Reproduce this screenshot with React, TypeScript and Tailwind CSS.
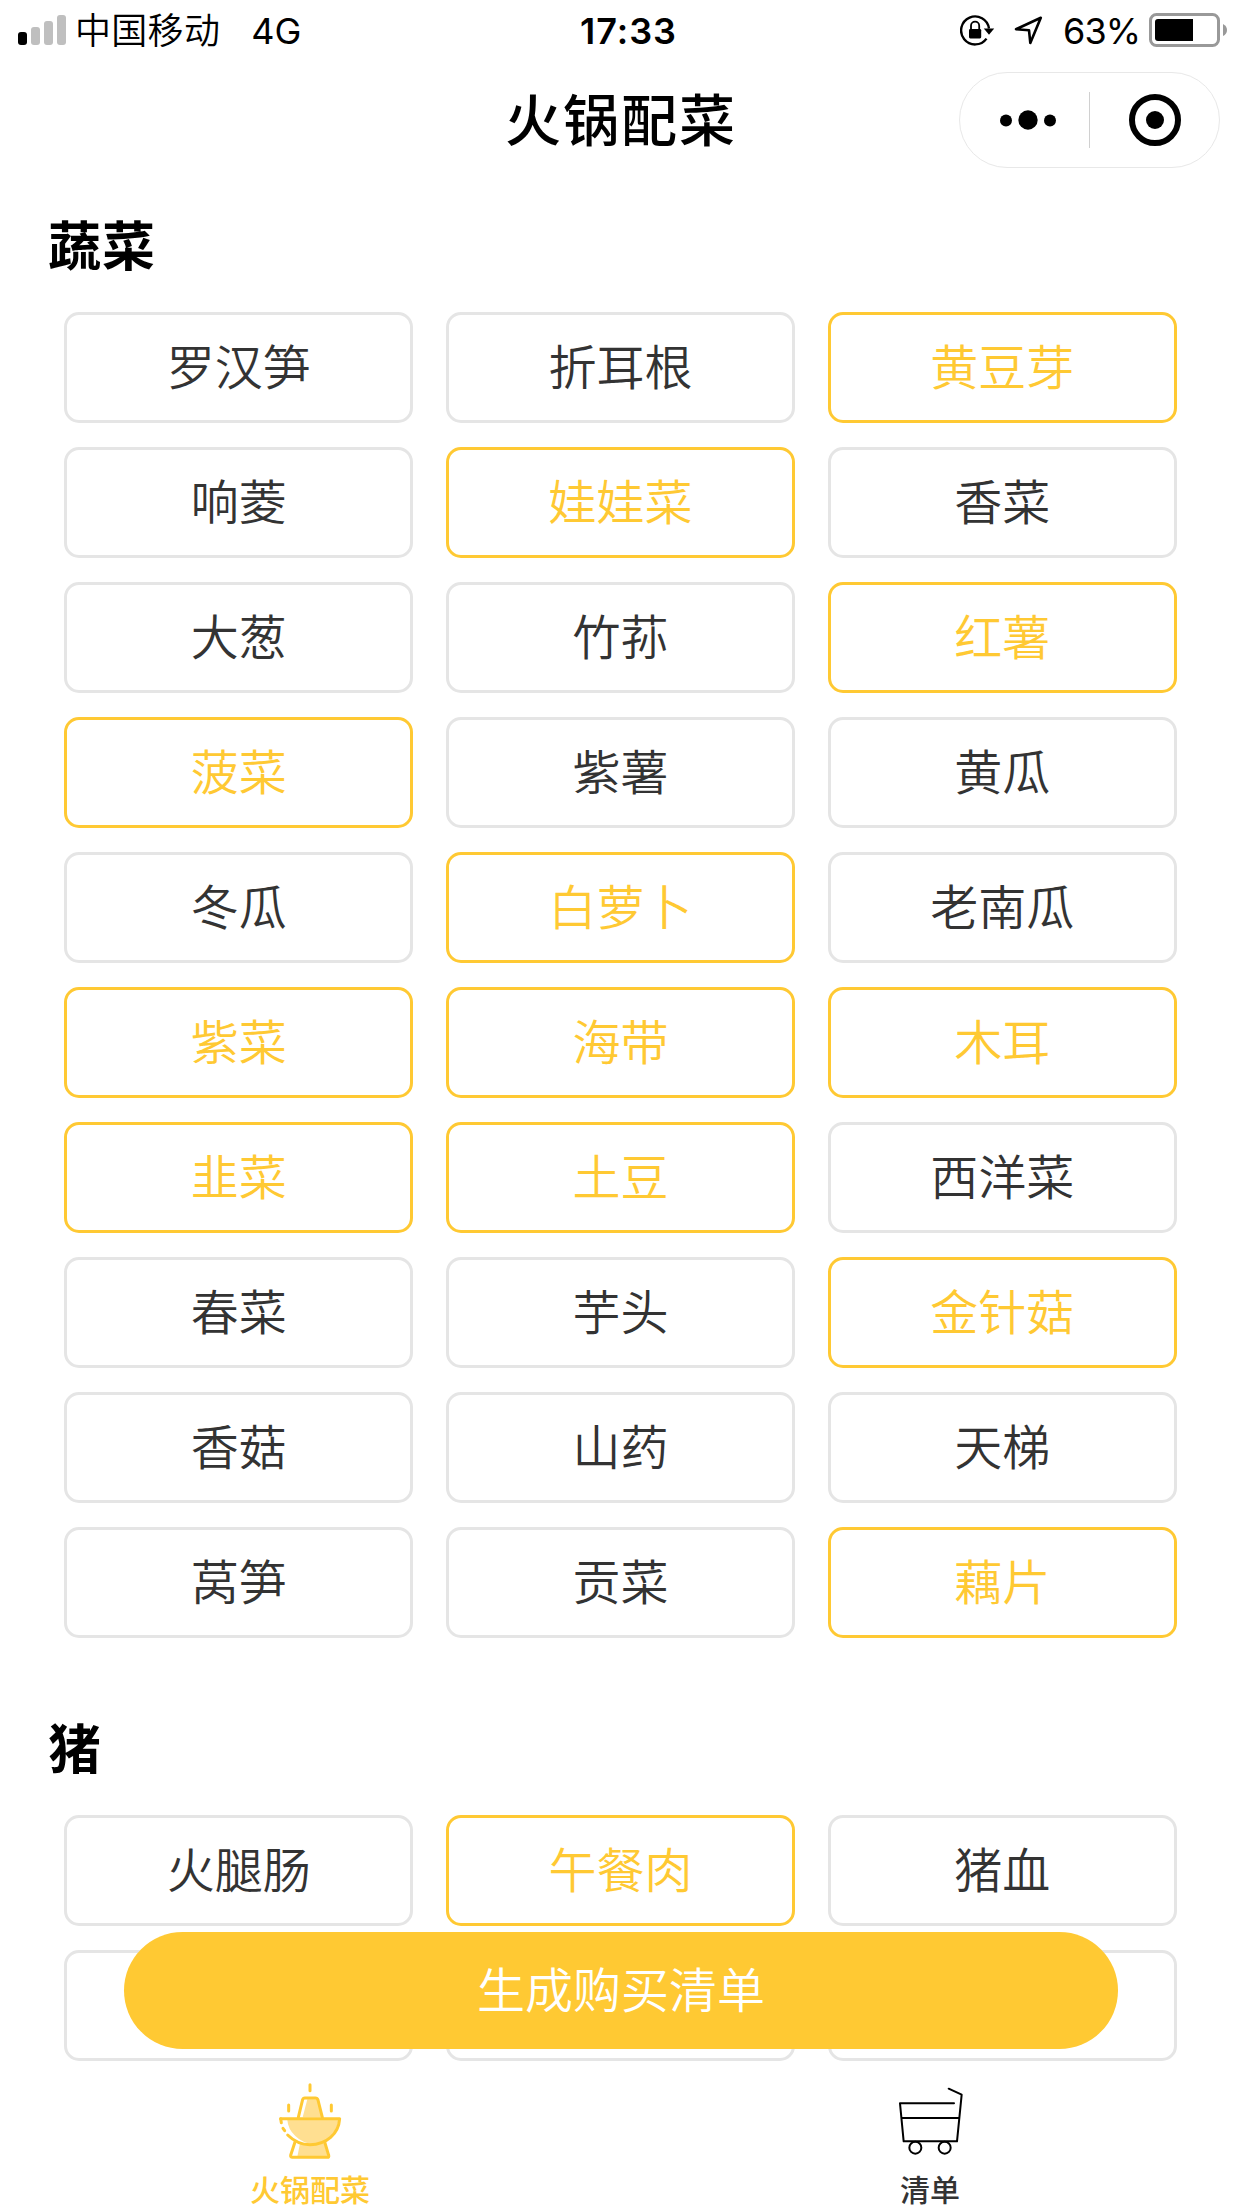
import { clsx } from 'clsx';

const sections = [
  {
    title: '蔬菜',
    items: [
      { name: '罗汉笋' },
      { name: '折耳根' },
      { name: '黄豆芽', selected: true },
      { name: '响菱' },
      { name: '娃娃菜', selected: true },
      { name: '香菜' },
      { name: '大葱' },
      { name: '竹荪' },
      { name: '红薯', selected: true },
      { name: '菠菜', selected: true },
      { name: '紫薯' },
      { name: '黄瓜' },
      { name: '冬瓜' },
      { name: '白萝卜', selected: true },
      { name: '老南瓜' },
      { name: '紫菜', selected: true },
      { name: '海带', selected: true },
      { name: '木耳', selected: true },
      { name: '韭菜', selected: true },
      { name: '土豆', selected: true },
      { name: '西洋菜' },
      { name: '春菜' },
      { name: '芋头' },
      { name: '金针菇', selected: true },
      { name: '香菇' },
      { name: '山药' },
      { name: '天梯' },
      { name: '莴笋' },
      { name: '贡菜' },
      { name: '藕片', selected: true }
    ]
  },
  {
    title: '猪',
    items: [
      { name: '火腿肠' },
      { name: '午餐肉', selected: true },
      { name: '猪血' },
      { name: '' },
      { name: '' },
      { name: '' }
    ]
  }
];

function StatusBar() {
  return (
    <div className="grid h-[60px] grid-cols-3 items-center pr-[14px] pl-[18px] text-[36px] leading-[56px]">
      <div className="flex items-center">
        <div className="flex h-[30px] items-end gap-1">
          <div className="h-[13px] w-[9px] rounded-[3px] bg-black" />
          <div className="h-[18px] w-[9px] rounded-[3px] bg-[#bfbfbf]" />
          <div className="h-6 w-[9px] rounded-[3px] bg-[#bfbfbf]" />
          <div className="h-[30px] w-[9px] rounded-[3px] bg-[#bfbfbf]" />
        </div>
        <span className="ml-[9px] pt-[2px] font-[350] tracking-[0.3px]">中国移动</span>
        <span className="ml-[31px] pt-[2px]">4G</span>
      </div>
      <div className="pt-[2px] pl-[11px] text-center font-semibold tracking-[1px]">17:33</div>
      <div className="flex items-center justify-end">
        <svg className="h-[34px] w-[35px]" viewBox="0 0 35 34" fill="none">
          <path d="M26.5 25.6A14 14 0 1 1 29 15.5" stroke="#000" strokeWidth="2.4" />
          <path d="M23.8 15.5h10.4L29 21.8z" fill="#000" />
          <path d="M11 16.5v-3.8a4.1 4.1 0 0 1 8.2 0v3.8" stroke="#000" strokeWidth="1.8" />
          <rect x="9" y="16" width="12.2" height="9.4" rx="1.3" fill="#000" />
        </svg>
        <svg className="ml-[19px] h-[30px] w-[29px]" viewBox="0 0 29 30" fill="none">
          <path d="M2 14.2 26.8 2.8 16.3 27.9 15 15.2z" stroke="#000" strokeWidth="2.6" strokeLinejoin="round" />
        </svg>
        <span className="ml-[20px] pt-[2px] tracking-[-1px]">63%</span>
        <svg className="ml-[9px] h-[34px] w-[79px]" viewBox="0 0 79 34" fill="none">
          <rect x="1.5" y="1.5" width="68" height="31" rx="6" stroke="#999" strokeWidth="3" />
          <path d="M9 6h35v22H9a3 3 0 0 1-3-3V9a3 3 0 0 1 3-3z" fill="#000" />
          <path d="M74 11q4 2 4 6t-4 6z" fill="#999" />
        </svg>
      </div>
    </div>
  );
}

function NavBar() {
  return (
    <div className="grid h-[120px] grid-cols-[1fr_auto_1fr] items-center px-[22px]">
      <h1 className="col-start-2 pt-[2px] text-[56px] leading-none font-medium tracking-[2px]">火锅配菜</h1>
      <div className="flex h-24 w-[261px] items-center justify-self-end rounded-full border border-[#e8e8e8]">
        <svg className="h-24 w-[259px]" viewBox="0 0 259 96">
          <circle cx="46" cy="48.5" r="6" />
          <circle cx="68" cy="48" r="9.7" />
          <circle cx="90" cy="48.5" r="6" />
          <path d="M129.5 20v56" stroke="#d0d0d0" />
          <circle cx="195" cy="48" r="23" fill="none" stroke="#000" strokeWidth="6" />
          <circle cx="195" cy="48" r="9" />
        </svg>
      </div>
    </div>
  );
}

function HotpotIcon() {
  return (
    <svg className="h-[80px] w-[64px]" viewBox="174 60 192 240" fill="none" stroke="#ffc933" strokeWidth="9" strokeLinecap="round" strokeLinejoin="round">
      <path d="M262 118h30l14 54h-58zM240 250h72l12 40h-92zM202 180h154q-10 52-56 70-44 8-74-22-22-20-24-48z" fill="#ffdf91" stroke="none" />
      <path d="M270 74v18M206 135v18M334 135v18" />
      <path d="M235 172l13-54q2-4 6-4h32q6 0 8 6l13 52" />
      <path d="M182 176h177c-3 46-40 78-89 78-27 0-48-10-67-29" />
      <path d="M182 176l2 12M189 205l5 7" />
      <path d="M225 246l-13 40q-1 6 5 6h105q6 0 4-6l-12-40" />
    </svg>
  );
}

function CartIcon() {
  return (
    <svg className="h-[70px] w-[66px]" viewBox="142 78 198 210" fill="none" stroke="#000" strokeWidth="6" strokeLinecap="round" strokeLinejoin="round">
      <path d="M297 86l39 18-14 140H162l-11-114h162" />
      <path d="M157 174h170" />
      <circle cx="197" cy="263" r="18" />
      <circle cx="285" cy="263" r="18" />
    </svg>
  );
}

export default function App() {
  return (
    <div className="relative h-[2208px] w-[1242px] overflow-hidden bg-white font-[Inter,'Noto_Sans_CJK_SC',sans-serif] text-black">
      <StatusBar />
      <NavBar />

      <main className="pt-3">
        {sections.map((section) => (
          <section key={section.title} className="mb-[57px] pr-[65px] pl-16">
            <h2 className="-ml-4 flex h-[120px] items-center pb-[10px] text-[53px] leading-none font-bold tracking-[1px]">
              {section.title}
            </h2>
            <div className="grid grid-cols-3 gap-x-[32.4px] gap-y-6">
              {section.items.map((item, index) => (
                <div
                  key={index}
                  className={clsx(
                    'flex h-[111px] items-center justify-center rounded-[15px] border-3 text-[48px] leading-none font-[350]',
                    item.selected ? 'border-[#ffc933] text-[#ffc933]' : 'border-[#e5e5e5] text-[#333]'
                  )}
                >
                  {item.name}
                </div>
              ))}
            </div>
          </section>
        ))}
      </main>

      <button className="absolute top-[1932px] left-[124px] h-[117px] w-[994px] rounded-full bg-[#ffc933] text-[48px] leading-none font-[350] text-white">
        生成购买清单
      </button>

      <nav className="absolute inset-x-0 bottom-0 grid h-[147px] grid-cols-2 bg-white pr-[2px] text-[30px] leading-none font-medium">
        <div className="flex flex-col items-center pt-[19px] text-[#ffc933]">
          <HotpotIcon />
          <span className="mt-[15px]">火锅配菜</span>
        </div>
        <div className="flex flex-col items-center pt-[25px] text-[#333]">
          <CartIcon />
          <span className="mt-[19px]">清单</span>
        </div>
      </nav>
    </div>
  );
}
